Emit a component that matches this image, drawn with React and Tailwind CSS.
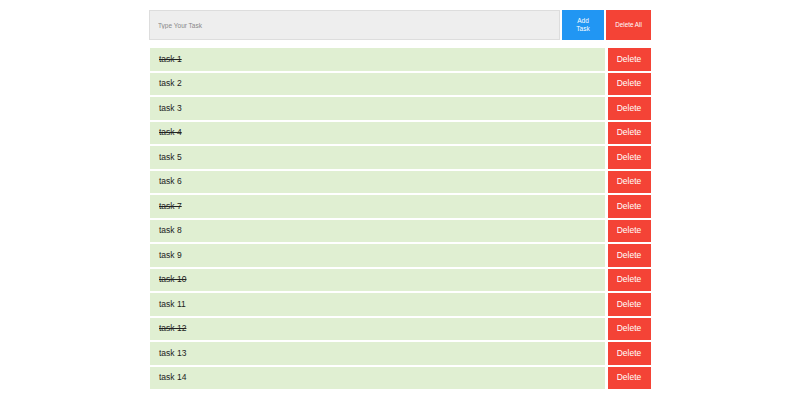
import React, { useState } from 'react';

const initialTasks = [
    { id: 1, text: 'task 1', done: true },
    { id: 2, text: 'task 2', done: false },
    { id: 3, text: 'task 3', done: false },
    { id: 4, text: 'task 4', done: true },
    { id: 5, text: 'task 5', done: false },
    { id: 6, text: 'task 6', done: false },
    { id: 7, text: 'task 7', done: true },
    { id: 8, text: 'task 8', done: false },
    { id: 9, text: 'task 9', done: false },
    { id: 10, text: 'task 10', done: true },
    { id: 11, text: 'task 11', done: false },
    { id: 12, text: 'task 12', done: true },
    { id: 13, text: 'task 13', done: false },
    { id: 14, text: 'task 14', done: false },
];

const App = () => {
    const [tasks, setTasks] = useState(initialTasks);
    const [value, setValue] = useState('');

    const addTask = () => {
        if (!value.trim()) return;
        setTasks([...tasks, { id: Date.now(), text: value.trim(), done: false }]);
        setValue('');
    };

    const toggle = (id) => setTasks(tasks.map((t) => (t.id === id ? { ...t, done: !t.done } : t)));
    const remove = (id) => setTasks(tasks.filter((t) => t.id !== id));

    return (
        <div className="w-[800px] h-[400px] bg-white font-['Liberation_Sans',Arial,sans-serif] overflow-hidden">
            <div className="w-[502px] mx-auto pt-[10px]">
                {/* Input row */}
                <div className="flex h-[30px] gap-[2px]">
                    <input
                        type="text"
                        placeholder="Type Your Task"
                        className="w-[411px] h-full bg-[#eeeeee] border border-[#dddddd] px-[8px] text-[6.5px] text-[#555] placeholder:text-[#888] focus:outline-none"
                        value={value}
                        onChange={(e) => setValue(e.target.value)}
                        onKeyDown={(e) => e.key === 'Enter' && addTask()}
                    />
                    <button
                        onClick={addTask}
                        className="w-[42px] h-full bg-[#2196f3] text-white text-[6.5px] leading-[8px]"
                    >
                        Add<br />Task
                    </button>
                    <button
                        onClick={() => setTasks([])}
                        className="w-[45px] h-full bg-[#f44336] text-white text-[6.3px]"
                    >
                        Delete All
                    </button>
                </div>

                {/* Task list */}
                <ul className="mt-[8px] pl-[1px] flex flex-col gap-[2px]">
                    {tasks.map((task) => (
                        <li key={task.id} className="flex h-[22.5px] gap-[2.5px]">
                            <div
                                onClick={() => toggle(task.id)}
                                className={`w-[455px] h-full bg-[#e0efd2] flex items-center pl-[9px] text-[8.5px] text-[#222] cursor-pointer ${task.done ? 'line-through' : ''}`}
                            >
                                {task.text}
                            </div>
                            <button
                                onClick={() => remove(task.id)}
                                className="w-[43px] h-full bg-[#f44336] text-white text-[8.5px]"
                            >
                                Delete
                            </button>
                        </li>
                    ))}
                </ul>
            </div>
        </div>
    );
};

export default App;
